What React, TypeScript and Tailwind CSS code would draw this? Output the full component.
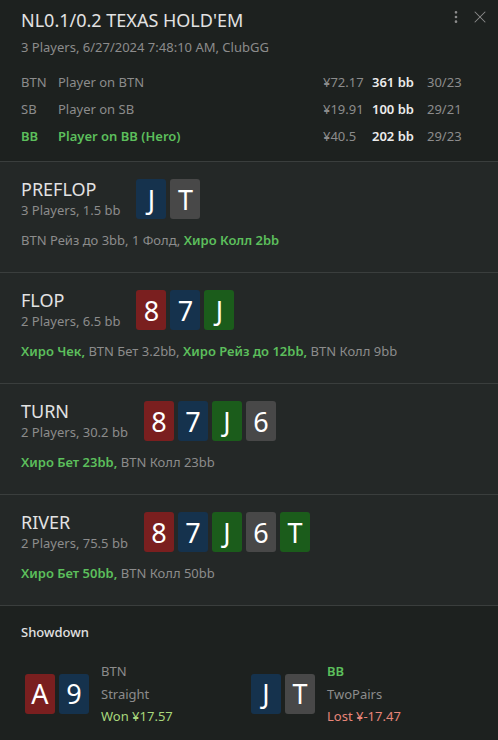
import { MoreVertical, X } from "lucide-react";

type Suit = "r" | "b" | "g" | "k";

const suitBg: Record<Suit, string> = {
  r: "bg-[#7a1f1f]",
  b: "bg-[#15324d]",
  g: "bg-[#1b5c1b]",
  k: "bg-[#484848]",
};

const Card = ({ rank, suit }: { rank: string; suit: Suit }) => (
  <div
    className={`flex h-10 w-[30px] items-center justify-center rounded-[3px] text-[27px] leading-none text-white ${suitBg[suit]}`}
  >
    {rank}
  </div>
);

type Act = { text: string; hero?: boolean };

const streets: {
  name: string;
  info: string;
  cards: [string, Suit][];
  actions: Act[];
}[] = [
  {
    name: "PREFLOP",
    info: "3 Players, 1.5 bb",
    cards: [
      ["J", "b"],
      ["T", "k"],
    ],
    actions: [
      { text: "BTN Рейз до 3bb, 1 Фолд, " },
      { text: "Хиро Колл 2bb", hero: true },
    ],
  },
  {
    name: "FLOP",
    info: "2 Players, 6.5 bb",
    cards: [
      ["8", "r"],
      ["7", "b"],
      ["J", "g"],
    ],
    actions: [
      { text: "Хиро Чек,", hero: true },
      { text: " BTN Бет 3.2bb, " },
      { text: "Хиро Рейз до 12bb,", hero: true },
      { text: " BTN Колл 9bb" },
    ],
  },
  {
    name: "TURN",
    info: "2 Players, 30.2 bb",
    cards: [
      ["8", "r"],
      ["7", "b"],
      ["J", "g"],
      ["6", "k"],
    ],
    actions: [
      { text: "Хиро Бет 23bb,", hero: true },
      { text: " BTN Колл 23bb" },
    ],
  },
  {
    name: "RIVER",
    info: "2 Players, 75.5 bb",
    cards: [
      ["8", "r"],
      ["7", "b"],
      ["J", "g"],
      ["6", "k"],
      ["T", "g"],
    ],
    actions: [
      { text: "Хиро Бет 50bb,", hero: true },
      { text: " BTN Колл 50bb" },
    ],
  },
];

const players = [
  { pos: "BTN", name: "Player on BTN", stack: "¥72.17", bb: "361 bb", stat: "30/23" },
  { pos: "SB", name: "Player on SB", stack: "¥19.91", bb: "100 bb", stat: "29/21" },
  { pos: "BB", name: "Player on BB (Hero)", stack: "¥40.5", bb: "202 bb", stat: "29/23", hero: true },
];

export default function App() {
  return (
    <div className="h-[740px] w-[498px] overflow-hidden bg-[#1d211f] font-['Segoe_UI','Noto_Sans',sans-serif] text-[#8c8c8c]">
      {/* HEADER */}
      <div className="relative border-b border-[#3a3e3d] px-[21px] pt-[9px] pb-[11px]">
        <div className="text-[18px] leading-[22px] text-[#e2e2e2]">NL0.1/0.2 TEXAS HOLD'EM</div>
        <div className="mt-[7px] text-[13px] leading-[18px]">3 Players, 6/27/2024 7:48:10 AM, ClubGG</div>

        <div className="absolute top-[7px] right-[8px] flex items-center gap-[6px] text-[#8c8c8c]">
          <MoreVertical size={16} strokeWidth={2} />
          <X size={20} strokeWidth={1.25} />
        </div>

        <div className="mt-[13px] text-[13px]">
          {players.map((p) => (
            <div
              key={p.pos}
              className={`grid h-[27px] grid-cols-[37px_1fr_49px_55px_50px] items-center ${
                p.hero ? "font-semibold text-[#5cbf5c]" : ""
              }`}
            >
              <span>{p.pos}</span>
              <span>{p.name}</span>
              <span className="font-normal text-[#8c8c8c]">{p.stack}</span>
              <span className="font-semibold text-[#ececec]">{p.bb}</span>
              <span className="font-normal text-[#8c8c8c]">{p.stat}</span>
            </div>
          ))}
        </div>
      </div>

      {/* STREETS */}
      {streets.map((s) => (
        <div
          key={s.name}
          className="border-b border-[#3a3e3d] bg-[#242827] px-[21px] pt-4 pb-[22px] last:border-b-0"
        >
          <div className="flex items-center gap-4">
            <div>
              <div className="text-[18px] leading-[22px] text-[#e2e2e2]">{s.name}</div>
              <div className="text-[13px] leading-[20px]">{s.info}</div>
            </div>
            <div className="flex gap-1">
              {s.cards.map(([r, su], i) => (
                <Card key={i} rank={r} suit={su} />
              ))}
            </div>
          </div>
          <div className="mt-[10px] text-[13px] leading-5">
            {s.actions.map((a, i) => (
              <span key={i} className={a.hero ? "font-semibold text-[#5cbf5c]" : ""}>
                {a.text}
              </span>
            ))}
          </div>
        </div>
      ))}

      {/* SHOWDOWN */}
      <div className="px-[21px] pt-[16px]">
        <div className="text-[13px] leading-5 font-medium text-[#e2e2e2]">Showdown</div>
        <div className="mt-[18px] grid grid-cols-2 pl-1">
          <div className="flex items-center gap-3">
            <div className="flex gap-1">
              <Card rank="A" suit="r" />
              <Card rank="9" suit="b" />
            </div>
            <div className="text-[13px] leading-[22.5px]">
              <div>BTN</div>
              <div>Straight</div>
              <div className="text-[#a8d87c]">Won ¥17.57</div>
            </div>
          </div>
          <div className="flex items-center gap-3">
            <div className="flex gap-1">
              <Card rank="J" suit="b" />
              <Card rank="T" suit="k" />
            </div>
            <div className="text-[13px] leading-[22.5px]">
              <div className="font-semibold text-[#5cbf5c]">BB</div>
              <div>TwoPairs</div>
              <div className="text-[#e8867a]">Lost ¥-17.47</div>
            </div>
          </div>
        </div>
      </div>
    </div>
  );
}
